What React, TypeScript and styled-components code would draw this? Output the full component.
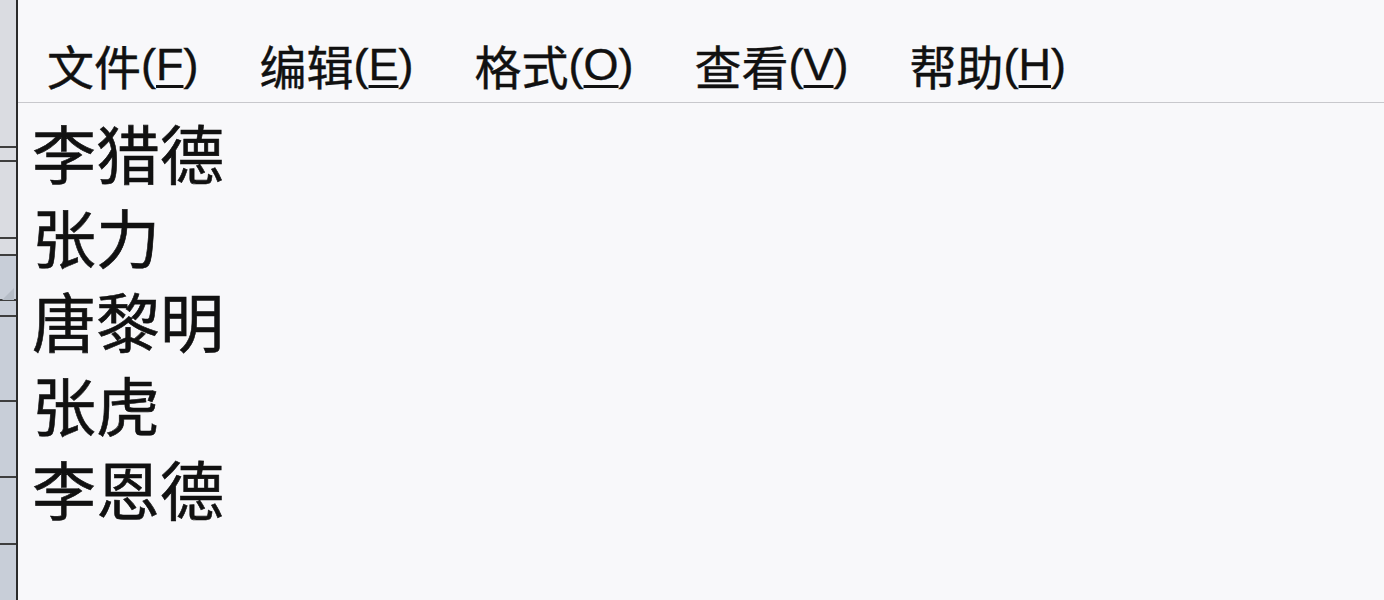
import * as React from 'react';
import styled, { createGlobalStyle } from 'styled-components';

const GlobalStyle = createGlobalStyle`
  html, body {
    margin: 0;
    padding: 0;
    background: #f8f8fa;
  }
  body {
    font-family: 'Noto Sans CJK SC', 'Noto Sans', sans-serif;
    color: #111;
  }
`;

const Window = styled.div`
  display: flex;
  width: 1384px;
  height: 600px;
  overflow: hidden;
`;

const EdgeStrip = styled.div`
  flex: 0 0 16px;
  background: linear-gradient(
    to bottom,
    #dadce1 0px,
    #dadce1 255px,
    #c8ced8 255px,
    #c8ced8 100%
  );
  border-right: 2px solid #2a2a2a;
`;

const Editor = styled.div`
  flex: 1;
  display: flex;
  flex-direction: column;
  background: #f8f8fa;
`;

const MenuBar = styled.div`
  display: flex;
  align-items: center;
  height: 103px;
  padding: 26px 0 0 29px;
  box-sizing: border-box;
  gap: 61px;
  border-bottom: 1px solid #c8c8cc;
`;

const MenuItem = styled.div`
  display: flex;
  align-items: center;
  font-size: 47px;
  line-height: 1;
  color: #111;
  -webkit-text-stroke: 0.4px #111;
`;

const Mnemonic = styled.span`
  font-family: 'Liberation Sans', 'Noto Sans', sans-serif;
  font-size: 45px;
  display: inline-block;

  u {
    text-decoration-thickness: 2.5px;
    text-underline-offset: 5px;
  }
`;

const TextArea = styled.div`
  padding: 6px 0 0 14px;
`;

const Line = styled.div`
  font-size: 64px;
  line-height: 84px;
  color: #111;
  -webkit-text-stroke: 0.6px #111;
`;

const ticks = [147, 161, 238, 255, 300, 316, 401, 477, 544];

const menus = [
  { label: '文件', key: 'F' },
  { label: '编辑', key: 'E' },
  { label: '格式', key: 'O' },
  { label: '查看', key: 'V' },
  { label: '帮助', key: 'H' },
];

const lines = ['李猎德', '张力', '唐黎明', '张虎', '李恩德'];

export default function App() {
  return (
    <>
      <GlobalStyle />
      <Window>
        <EdgeStrip>
          <svg width="16" height="600" style={{ display: 'block' }}>
            {ticks.map((y) => (
              <line key={y} x1="0" y1={y} x2="16" y2={y} stroke="#3e3e3e" strokeWidth="2" />
            ))}
            <polygon points="2,300 14,288 14,300" fill="#b5bcc6" />
          </svg>
        </EdgeStrip>
        <Editor>
          <MenuBar>
            {menus.map((m) => (
              <MenuItem key={m.key}>
                {m.label}
                <Mnemonic>
                  (<u>{m.key}</u>)
                </Mnemonic>
              </MenuItem>
            ))}
          </MenuBar>
          <TextArea>
            {lines.map((l, i) => (
              <Line key={i}>{l}</Line>
            ))}
          </TextArea>
        </Editor>
      </Window>
    </>
  );
}
